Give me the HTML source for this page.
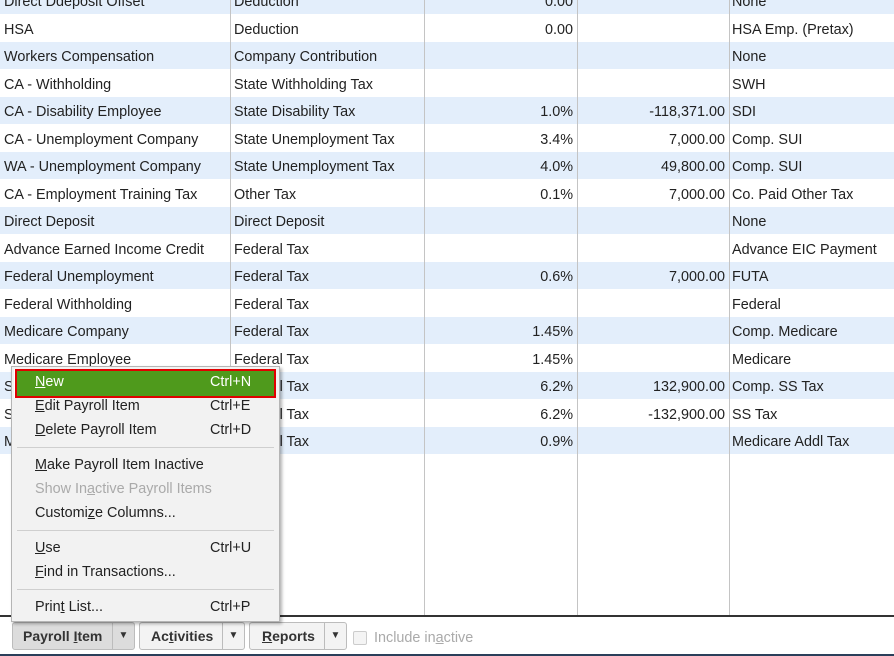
<!DOCTYPE html>
<html><head><style>
body{margin:0;width:894px;height:656px;overflow:hidden;background:#fff;font-family:"Liberation Sans",Arial,sans-serif;font-size:14.4px;color:#222;position:relative}
.r{position:absolute;left:0;width:894px;height:27.5px}
.b{background:#e3eefb}
.c{position:absolute;top:2.5px;line-height:27.5px;white-space:nowrap}
.v{position:absolute;top:0;width:1px;height:615px;background:#c4c4c4}
.m{position:absolute;left:11px;top:366px;width:267px;height:254px;background:#f2f2f2;border:1px solid #b5b5b5;box-shadow:2px 2px 3px rgba(0,0,0,.3)}
.i{position:absolute;left:23px;font-size:14.4px;color:#222;white-space:nowrap}
.k{position:absolute;left:175px}
.s{position:absolute;left:5px;width:257px;height:1px;background:#cfcfcf}
.btn{position:absolute;top:622px;height:26px;border:1px solid #bcbcbc;border-radius:3px;background:#f3f3f3;font-weight:bold;color:#333;line-height:26px;font-size:14px}
.dd{position:absolute;right:0;top:0;width:21px;height:26px;border-left:1px solid #bcbcbc;text-align:center;font-size:10px}
</style></head><body>
<div id="rows"></div>
<script>
var d=[["Direct Ddeposit Offset","Deduction","0.00","","None"],["HSA","Deduction","0.00","","HSA Emp. (Pretax)"],["Workers Compensation","Company Contribution","","","None"],["CA - Withholding","State Withholding Tax","","","SWH"],["CA - Disability Employee","State Disability Tax","1.0%","-118,371.00","SDI"],["CA - Unemployment Company","State Unemployment Tax","3.4%","7,000.00","Comp. SUI"],["WA - Unemployment Company","State Unemployment Tax","4.0%","49,800.00","Comp. SUI"],["CA - Employment Training Tax","Other Tax","0.1%","7,000.00","Co. Paid Other Tax"],["Direct Deposit","Direct Deposit","","","None"],["Advance Earned Income Credit","Federal Tax","","","Advance EIC Payment"],["Federal Unemployment","Federal Tax","0.6%","7,000.00","FUTA"],["Federal Withholding","Federal Tax","","","Federal"],["Medicare Company","Federal Tax","1.45%","","Comp. Medicare"],["Medicare Employee","Federal Tax","1.45%","","Medicare"],["Social Security Company","Federal Tax","6.2%","132,900.00","Comp. SS Tax"],["Social Security Employee","Federal Tax","6.2%","-132,900.00","SS Tax"],["Medicare Employee Addl Tax","Federal Tax","0.9%","","Medicare Addl Tax"]];
var h="";d.forEach(function(r,i){h+='<div class="r'+(i%2==0?' b':'')+'" style="top:'+(-13.5+27.5*i)+'px"><span class="c" style="left:4px">'+r[0]+'</span><span class="c" style="left:234px">'+r[1]+'</span><span class="c" style="right:321px">'+r[2]+'</span><span class="c" style="right:169px">'+r[3]+'</span><span class="c" style="left:732px">'+r[4]+'</span></div>';});
document.getElementById("rows").innerHTML=h;
</script>
<div class="v" style="left:230px"></div><div class="v" style="left:424px"></div><div class="v" style="left:577px"></div><div class="v" style="left:729px"></div>
<div style="position:absolute;left:0;top:615px;width:894px;height:2px;background:#333"></div>
<div style="position:absolute;left:0;top:617px;width:894px;height:37px;background:#fff"></div>
<div style="position:absolute;left:0;top:654px;width:894px;height:2px;background:#2a3f5a"></div>
<div class="btn" style="left:12px;width:121px;background:#dcdcdc"><span style="padding-left:10px">Payroll <u>I</u>tem</span><div class="dd">▼</div></div>
<div class="btn" style="left:139px;width:104px"><span style="padding-left:11px">Ac<u>t</u>ivities</span><div class="dd">▼</div></div>
<div class="btn" style="left:249px;width:96px"><span style="padding-left:12px"><u>R</u>eports</span><div class="dd">▼</div></div>
<div style="position:absolute;left:353px;top:631px;width:12px;height:12px;border:1px solid #ccc;border-radius:2px;background:#f4f4f4"></div>
<div style="position:absolute;left:374px;top:630px;color:#aaa;font-size:14.4px">Include in<u>a</u>ctive</div>
<div class="m">
<div style="position:absolute;left:2px;top:2px;width:261px;height:29px;background:#fff"></div>
<div style="position:absolute;left:3px;top:2px;width:257px;height:25px;border:2px solid #e00000;background:#4f9a1c"></div>
<div class="i" style="top:7px;color:#fff"><u>N</u>ew<span class="k" style="color:#fff">Ctrl+N</span></div>
<div class="i" style="top:31px"><u>E</u>dit Payroll Item<span class="k">Ctrl+E</span></div>
<div class="i" style="top:55px"><u>D</u>elete Payroll Item<span class="k">Ctrl+D</span></div>
<div class="s" style="top:80px"></div>
<div class="i" style="top:90px"><u>M</u>ake Payroll Item Inactive</div>
<div class="i" style="top:114px;color:#aaa">Show In<u>a</u>ctive Payroll Items</div>
<div class="i" style="top:138px">Customi<u>z</u>e Columns...</div>
<div class="s" style="top:163px"></div>
<div class="i" style="top:173px"><u>U</u>se<span class="k">Ctrl+U</span></div>
<div class="i" style="top:197px"><u>F</u>ind in Transactions...</div>
<div class="s" style="top:222px"></div>
<div class="i" style="top:232px">Prin<u>t</u> List...<span class="k">Ctrl+P</span></div>
</div>
</body></html>
